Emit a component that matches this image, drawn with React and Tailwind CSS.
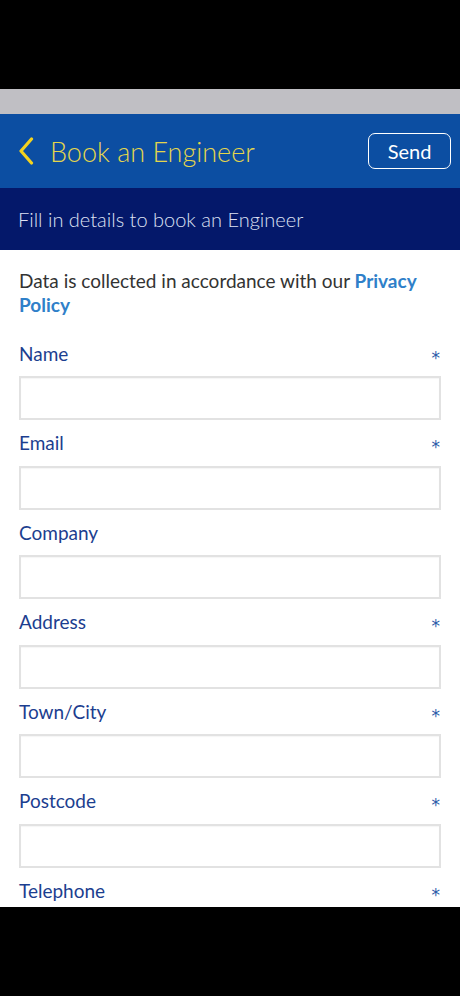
import React from "react";

const fields = [
  { label: "Name", required: true },
  { label: "Email", required: true },
  { label: "Company", required: false },
  { label: "Address", required: true },
  { label: "Town/City", required: true },
  { label: "Postcode", required: true },
  { label: "Telephone", required: true },
];

export default function App() {
  return (
    <div
      className="w-[460px] h-[996px] bg-black flex flex-col overflow-hidden"
      style={{ fontFamily: "Lato, 'Open Sans', sans-serif" }}
    >
      <div className="h-[89px] shrink-0 bg-black" />
      <div className="h-[25px] shrink-0 bg-[#c0bfc4]" />
      <div className="h-[74px] shrink-0 bg-[#0c4ea2] flex items-center pl-[18px] pr-[9px]">
        <svg width="16" height="28" viewBox="0 0 16 28" className="shrink-0">
          <path d="M13.5 2 L3 14 L13.5 26" fill="none" stroke="#f3d21f" strokeWidth="3.2" strokeLinecap="round" strokeLinejoin="round" />
        </svg>
        <div className="ml-[16px] text-[27px] font-light text-[#e4d64c] leading-none">
          Book an Engineer
        </div>
        <div className="ml-auto w-[83px] h-[36px] border border-white rounded-[7px] flex items-center justify-center text-white text-[20px] leading-none">
          Send
        </div>
      </div>
      <div className="h-[62px] shrink-0 bg-[#04186a] flex items-center px-[18px] text-[20px] font-light text-[#dfe2f4] leading-none">
        Fill in details to book an Engineer
      </div>
      <div className="h-[657px] shrink-0 bg-white px-[19px] pt-[19px] overflow-hidden">
        <p className="text-[19px] leading-[24px] text-[#333333]">
          Data is collected in accordance with our <span className="font-bold text-[#2f80c9]">Privacy Policy</span>
        </p>
        <div className="mt-[24px] flex flex-col">
          {fields.map((f) => (
            <div key={f.label} className="flex flex-col">
              <div className="flex items-center justify-between h-[24px]">
                <span className="text-[19px] text-[#1c3e8f] leading-none">{f.label}</span>
                {f.required && (
                  <span
                    className="text-[17px] text-[#2a5aa8] leading-none mt-[10px] pr-[1px]"
                    style={{ fontFamily: "'DejaVu Sans', sans-serif" }}
                  >
                    *
                  </span>
                )}
              </div>
              <div className="mt-[11px] mb-[10.6px] h-[44px] w-[422px] border-2 border-[#e2e2e2] bg-white shadow-[inset_0_1px_1px_rgba(0,0,0,0.04)]" />
            </div>
          ))}
        </div>
      </div>
      <div className="flex-1 bg-black" />
    </div>
  );
}
